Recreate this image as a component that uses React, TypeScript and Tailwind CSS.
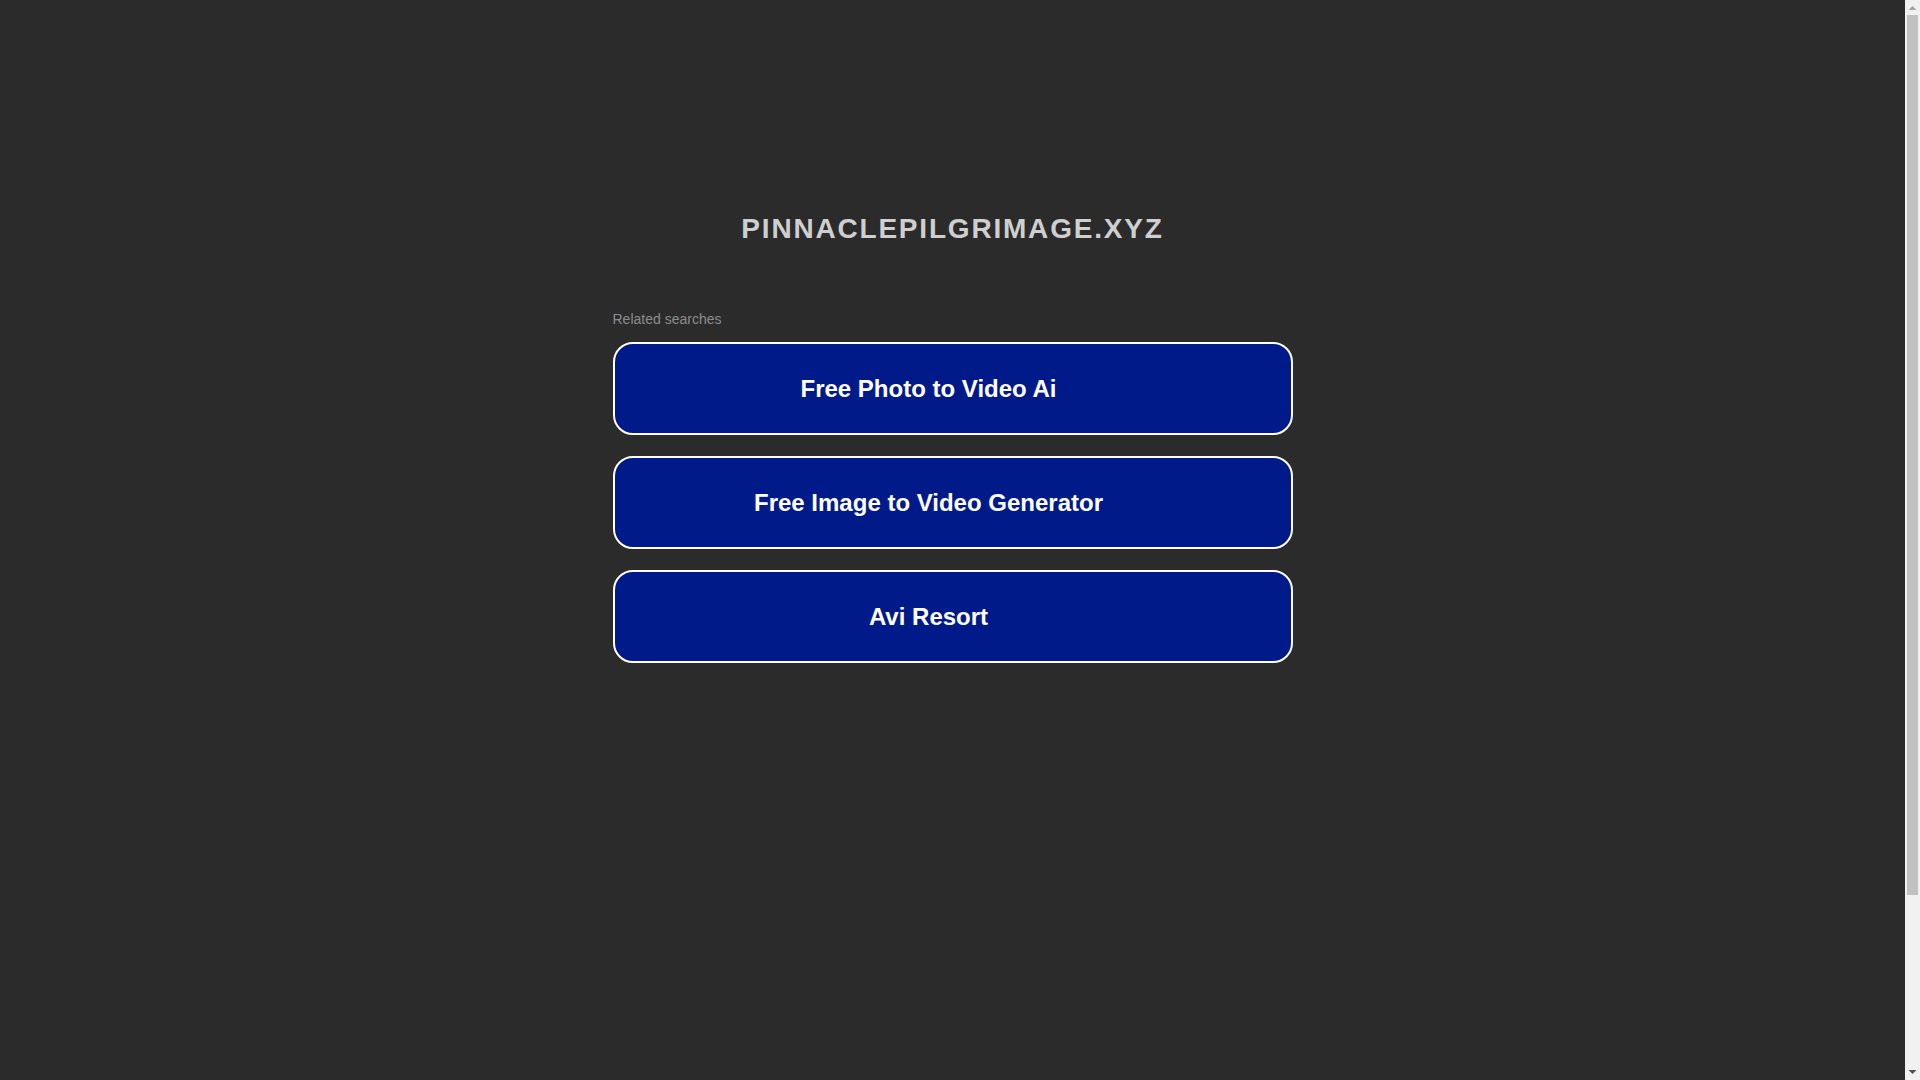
import React from 'react';

const searches = ['Free Photo to Video Ai', 'Free Image to Video Generator', 'Avi Resort'];

function Scrollbar() {
  return (
    <div className="flex h-full w-[15px] shrink-0 flex-col items-center bg-[#f1f1f1]">
      <svg width="15" height="15" viewBox="0 0 15 15" className="shrink-0">
        <path d="M3.5 10 L7.5 6 L11.5 10 Z" fill="#a3a3a3" />
      </svg>
      <div className="h-[880px] w-[11px] shrink-0 bg-[#c1c1c1]" />
      <div className="flex-1" />
      <svg width="15" height="15" viewBox="0 0 15 15" className="shrink-0">
        <path d="M3.5 5 L7.5 9 L11.5 5 Z" fill="#505050" />
      </svg>
    </div>
  );
}

export default function App() {
  return (
    <div className="flex h-screen w-full overflow-hidden bg-[#2b2b2b] font-['Liberation_Sans',Arial,sans-serif]">
      <main className="flex flex-1 flex-col items-center pt-[213px]">
        {/* Domain title */}
        <h1 className="text-[28px] leading-8 font-bold tracking-[1.8px] text-[#cfcfcf]">
          PINNACLEPILGRIMAGE.XYZ
        </h1>

        {/* Related searches */}
        <div className="mt-[64px] flex w-[680px] flex-col">
          <p className="mb-[13px] text-sm leading-5 text-[#8c8c8c]">Related searches</p>
          <div className="flex flex-col gap-[21px]">
            {searches.map((s) => (
              <a
                key={s}
                href="#"
                className="flex h-[93px] items-center justify-center rounded-[20px] border-2 border-white bg-[#011a8a] pl-6 pr-[72px] text-2xl font-bold text-white"
              >
                {s}
              </a>
            ))}
          </div>
        </div>
      </main>
      <Scrollbar />
    </div>
  );
}
